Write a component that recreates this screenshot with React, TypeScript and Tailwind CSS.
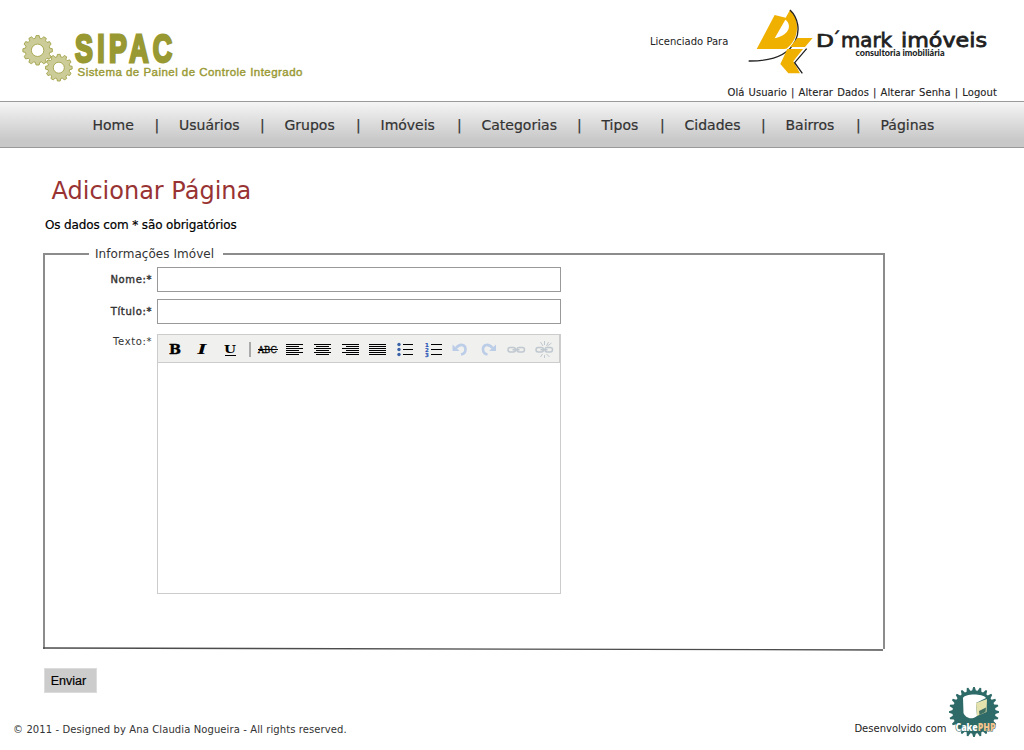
import React from "react";

function gearPath(cx: number, cy: number, outer: number, inner: number, teeth: number, tip = 0.2) {
  const points: string[] = [];
  const step = (Math.PI * 2) / teeth;
  for (let i = 0; i < teeth; i++) {
    const a = i * step - Math.PI / 2;
    const corners: [number, number][] = [
      [inner, -0.34],
      [outer, -tip],
      [outer, tip],
      [inner, 0.34],
    ];
    for (const [r, t] of corners) {
      points.push(`${(cx + r * Math.cos(a + t * step)).toFixed(2)} ${(cy + r * Math.sin(a + t * step)).toFixed(2)}`);
    }
  }
  return `M${points.join("L")}Z`;
}

function SipacLogo() {
  return (
    <svg width="300" height="80" viewBox="10 20 300 80" className="block">
      <g fill="#cccc99" stroke="#a3a34a" strokeWidth="0.9">
        <path d={gearPath(37.6, 50.3, 14.8, 12.3, 12)} />
        <path d={gearPath(58.8, 67.7, 13.4, 11, 12)} />
        <circle cx="37.6" cy="50.3" r="6.2" fill="#fff" />
        <circle cx="58.8" cy="67.7" r="5.5" fill="#fff" />
      </g>
      <text
        transform="translate(75 62) scale(0.68 1)"
        fontFamily="Liberation Sans, sans-serif"
        fontWeight="700"
        fontSize="39.5"
        textLength="143"
        fill="#999933"
        stroke="#999933"
        strokeWidth="2.8"
      >
        SIPAC
      </text>
      <text
        x="77.5"
        y="75.5"
        fontFamily="Liberation Sans, sans-serif"
        fontSize="11.5"
        textLength="225"
        fill="#999933"
        stroke="#999933"
        strokeWidth="0.4"
      >
        Sistema de Painel de Controle Integrado
      </text>
    </svg>
  );
}

function DmarkLogo() {
  return (
    <svg width="250" height="74" viewBox="744 4 250 74" className="block">
      <g transform="translate(744 4) scale(0.33333)">
        <path d="M92 33L125 41L138 18C156 36 162 58 158 84C154 105 145 121 127 134L118 135H38Z" fill="#f0b000" />
        <path d="M124 47C141 58 143 91 92 103Z" fill="#fff" />
        <path d="M138 18C163 42 169 80 154 111C134 151 86 172 14 171" fill="none" stroke="#222" strokeWidth="4" />
        <path d="M160 102H206L183 129H138Z" fill="#f0b000" />
        <path d="M130 135H177L148 172L168 208H133L109 180Z" fill="#f0b000" />
        <path d="M188 134L152 176L175 208" fill="none" stroke="#222" strokeWidth="4" />
      </g>
      <g fill="#221f1f">
        <g fontFamily="DejaVu Sans, sans-serif" fontSize="15" stroke="#221f1f" strokeWidth="0.6">
          <text transform="translate(0 46.500) scale(1 1.150)" x="816" y="0" textLength="18" lengthAdjust="spacingAndGlyphs">D</text>
          <text x="832" y="45" fontSize="17">´</text>
          <text transform="translate(0 46.500) scale(1 1.280)" x="841" y="0" textLength="51" lengthAdjust="spacingAndGlyphs">mark</text>
          <text transform="translate(0 46.500) scale(1 1.280)" x="901" y="0" textLength="86" lengthAdjust="spacingAndGlyphs">imóveis</text>
        </g>
        <text
          x="855.5"
          y="55.5"
          fontFamily="Lato, sans-serif"
          fontWeight="900"
          fontSize="8.5"
          textLength="89"
          lengthAdjust="spacingAndGlyphs"
        >
          consultoria imobiliária
        </text>
      </g>
    </svg>
  );
}

function CakeBadge() {
  return (
    <svg width="52" height="54" viewBox="0 0 52 54" className="block">
      <path d={gearPath(25, 27, 25, 21.5, 24, 0.12)} fill="#2d6a68" />
      <path d="M14 13C15 9 33 8 37 13L27 18L28 31C22 36 16 32 14.500 28Z" fill="#fff" />
      <path d="M27 18L38 14L37.500 27L28 31Z" fill="#e6e2ae" />
      <path d="M30 26L37 22.500L36.500 27L30.500 30Z" fill="#3e6f62" />
      <text
        x="6.500"
        y="45.500"
        textLength="40"
        lengthAdjust="spacingAndGlyphs"
        fontFamily="Open Sans, sans-serif"
        fontWeight="800"
        fontSize="11"
        stroke="#2d6a68"
        strokeWidth="1.2"
        paintOrder="stroke"
        fill="#fff"
      >
        Cake<tspan fill="#f3c58c">PHP</tspan>
      </text>
    </svg>
  );
}

const navItems = ["Home", "Usuários", "Grupos", "Imóveis", "Categorias", "Tipos", "Cidades", "Bairros", "Páginas"];

function NavBar() {
  return (
    <nav className="h-[47px] border-y border-[#999] bg-linear-to-b from-[#f5f5f5] to-[#c8c8c8] to-85%">
      <ul className="grid h-full grid-cols-[86.500px_105.500px_96px_101px_120px_83px_101px_95px_60px] items-center pl-[92.500px] text-[14px] leading-[46px] text-[#333] [-webkit-text-stroke:0.2px_#333]">
        {navItems.map((item, i) => (
          <li key={item} className="flex justify-between whitespace-nowrap">
            <a>{item}</a>
            {i < navItems.length - 1 && <span className="w-[24.500px]">|</span>}
          </li>
        ))}
      </ul>
    </nav>
  );
}

function Lines({ rows }: { rows: [number, number][] }) {
  return (
    <g fill="#000">
      {rows.map(([left, width], i) => (
        <rect key={i} x={left} y={i * 2} width={width} height="1" />
      ))}
    </g>
  );
}

const full: [number, number] = [0, 17];

function Tool({ children, width = 28 }: { children: React.ReactNode; width?: number }) {
  return (
    <svg width={width} height="26" viewBox={`0 0 ${width} 26`} className="block shrink-0">
      {children}
    </svg>
  );
}

function Undo() {
  return (
    <>
      <path d="M6 12C10 7 15.500 8.500 15.500 13C15.500 16 14 18 11 18.500" fill="none" stroke="#bccde8" strokeWidth="2.600" />
      <path d="M2.500 8.500V15H9.500Z" fill="#bccde8" />
    </>
  );
}

function Chain() {
  return (
    <g fill="none" stroke="#c0c8d0" strokeWidth="1.500">
      <rect x="2.500" y="11.500" width="7.500" height="4.500" rx="2.200" />
      <rect x="11.500" y="11.500" width="7.500" height="4.500" rx="2.200" />
      <path d="M7 13.750H14" />
    </g>
  );
}

function Toolbar() {
  const letter = "text-[12px] [font-family:'DejaVu_Serif',serif]";
  return (
    <div className="flex h-[28px] items-center border-b border-r border-[#ccc] bg-[#f0f0ee] pl-[3px]">
      <Tool>
        <text x="8" y="18" className={letter} fontWeight="700" textLength="12" lengthAdjust="spacingAndGlyphs" stroke="#000" strokeWidth="0.4">B</text>
      </Tool>
      <Tool>
        <text x="8.500" y="18" className={letter} fontWeight="700" fontStyle="italic" textLength="9" lengthAdjust="spacingAndGlyphs">I</text>
      </Tool>
      <Tool>
        <text x="7" y="17" className="text-[11px] [font-family:'DejaVu_Serif',serif]" fontWeight="700" textLength="12" lengthAdjust="spacingAndGlyphs">U</text>
        <rect x="8" y="19" width="11" height="1" />
      </Tool>
      <Tool width={9}>
        <rect x="4" y="6" width="2" height="15" fill="#aaa" />
      </Tool>
      <Tool>
        <text x="4" y="17" className="text-[9.500px] [font-family:'DejaVu_Serif',serif]" textLength="19" lengthAdjust="spacingAndGlyphs" stroke="#000" strokeWidth="0.3">ABC</text>
        <rect x="4" y="13" width="20" height="1" />
      </Tool>
      <Tool>
        <g transform="translate(4 8)">
          <Lines rows={[full, [0, 13], full, [0, 13], full, [0, 13]]} />
        </g>
      </Tool>
      <Tool>
        <g transform="translate(4 8)">
          <Lines rows={[full, [2, 13], full, [2, 13], full, [2, 13]]} />
        </g>
      </Tool>
      <Tool>
        <g transform="translate(4 8)">
          <Lines rows={[full, [4, 13], full, [4, 13], full, [4, 13]]} />
        </g>
      </Tool>
      <Tool>
        <g transform="translate(3 8)">
          <Lines rows={[full, full, full, full, full, full]} />
        </g>
      </Tool>
      <Tool>
        {[8, 13, 18].map((y) => (
          <g key={y}>
            <circle cx="5" cy={y + 0.5} r="1.700" fill="#3a62a8" />
            <rect x="9" y={y} width="10" height="1" />
          </g>
        ))}
      </Tool>
      <Tool>
        {[8, 13, 18].map((y, i) => (
          <g key={y}>
            <text x="3" y={y + 2.500} className="text-[5.500px] [font-family:'DejaVu_Sans',sans-serif]" fontWeight="700" fill="#2a56b8" stroke="#2a56b8" strokeWidth="0.2">
              {i + 1}
            </text>
            <rect x="9" y={y} width="11" height="1" />
          </g>
        ))}
      </Tool>
      <Tool>
        <Undo />
      </Tool>
      <Tool>
        <g transform="translate(20.500 0) scale(-1 1)">
          <Undo />
        </g>
      </Tool>
      <Tool>
        <g transform="translate(-0.500 0)">
          <Chain />
        </g>
      </Tool>
      <Tool width={24}>
        <g transform="translate(-0.500 0)">
          <Chain />
          <path d="M7 6L9.500 10M11 5V9M15 6L13 10M18 7L14 10M7 21L9 18M11 22V19M16 21L13 18" stroke="#c0c8d0" />
        </g>
      </Tool>
    </div>
  );
}

function Label({ children, bold = false }: { children: string; bold?: boolean }) {
  return (
    <label
      className={`w-[107px] shrink-0 text-right text-[10px] leading-4 tracking-[0.6px] text-[#333] ${
        bold ? "[-webkit-text-stroke:0.4px_#333]" : ""
      }`}
    >
      {children}
    </label>
  );
}

export default function App() {
  return (
    <div className="flex h-[750px] w-[1024px] flex-col overflow-hidden bg-white [font-family:'DejaVu_Sans',sans-serif]">
      <header className="flex h-[101px] shrink-0 justify-between pl-[10px] pt-[4px]">
        <div className="pt-4">
          <SipacLogo />
        </div>
        <div className="flex w-[374px] flex-col">
          <div className="flex h-[81px] items-start">
            <span className="w-[94px] pt-[30px] text-[10px] leading-4 text-[#222]">Licenciado Para</span>
            <DmarkLogo />
          </div>
          <p className="whitespace-nowrap pl-[77.500px] text-[10px] leading-4 tracking-[0.06px] text-[#222] [word-spacing:0.85px] [-webkit-text-stroke:0.1px_#222]">
            Olá Usuario | Alterar Dados | Alterar Senha | Logout
          </p>
        </div>
      </header>

      <NavBar />

      <main className="flex flex-col pl-[43px]">
        <h1 className="mt-[27px] pl-[8.500px] text-[24px] leading-8 text-[#993333]">Adicionar Página</h1>
        <p className="mt-[10px] pl-[2px] text-[12px] leading-4 tracking-[-0.13px] text-black [-webkit-text-stroke:0.2px_#000]">
          Os dados com * são obrigatórios
        </p>

        <section className="mt-[13px] w-[842px]">
          <div className="flex h-4 items-center">
            <span className="h-[2px] w-[46px] bg-[#8c8c8c]" />
            <h2 className="w-[134px] pl-[6px] text-[12px] leading-4 tracking-[0.05px] text-[#333]">Informações Imóvel</h2>
            <span className="h-[2px] flex-1 bg-[#8c8c8c]" />
          </div>
          <div className="-mt-[8px] h-[395px] border-x-2 border-[#8c8c8c] pt-[13px]">
            <div className="flex h-[25px] items-center gap-[5px]">
              <Label bold>Nome:*</Label>
              <input className="h-[25px] w-[404px] border border-[#999] bg-white" />
            </div>
            <div className="mt-[7px] flex h-[25px] items-center gap-[5px]">
              <Label bold>Título:*</Label>
              <input className="h-[25px] w-[404px] border border-[#999] bg-white" />
            </div>
            <div className="mt-[10px] flex items-start gap-[5px]">
              <Label>Texto:*</Label>
              <div className="h-[260px] w-[404px] border border-[#ccc]">
                <Toolbar />
              </div>
            </div>
          </div>
          <svg width="842" height="4" viewBox="0 0 842 4" className="-mt-[2px] block">
            <path d="M0 1L840 3" stroke="#4c4c4c" strokeWidth="1.300" />
          </svg>
        </section>

        <button className="mt-[17px] ml-[1px] h-[25px] w-[53px] border border-[#dcdcdc] bg-[#ccc] pr-[4px] pt-[1px] text-[12.500px] leading-[22px] text-black [font-family:'Liberation_Sans',sans-serif] [-webkit-text-stroke:0.2px_#000]">
          Enviar
        </button>
      </main>

      <footer className="-mt-[8px] flex h-[65px] items-start justify-between pl-[13px] pr-[23.500px] text-[10px] leading-4 text-[#333]">
        <p className="pt-[37px] tracking-[0.1px]">© 2011 - Designed by Ana Claudia Nogueira - All rights reserved.</p>
        <div className="flex items-start gap-[2px]">
          <p className="pt-[36px] text-[#222]">Desenvolvido com</p>
          <CakeBadge />
        </div>
      </footer>
    </div>
  );
}
